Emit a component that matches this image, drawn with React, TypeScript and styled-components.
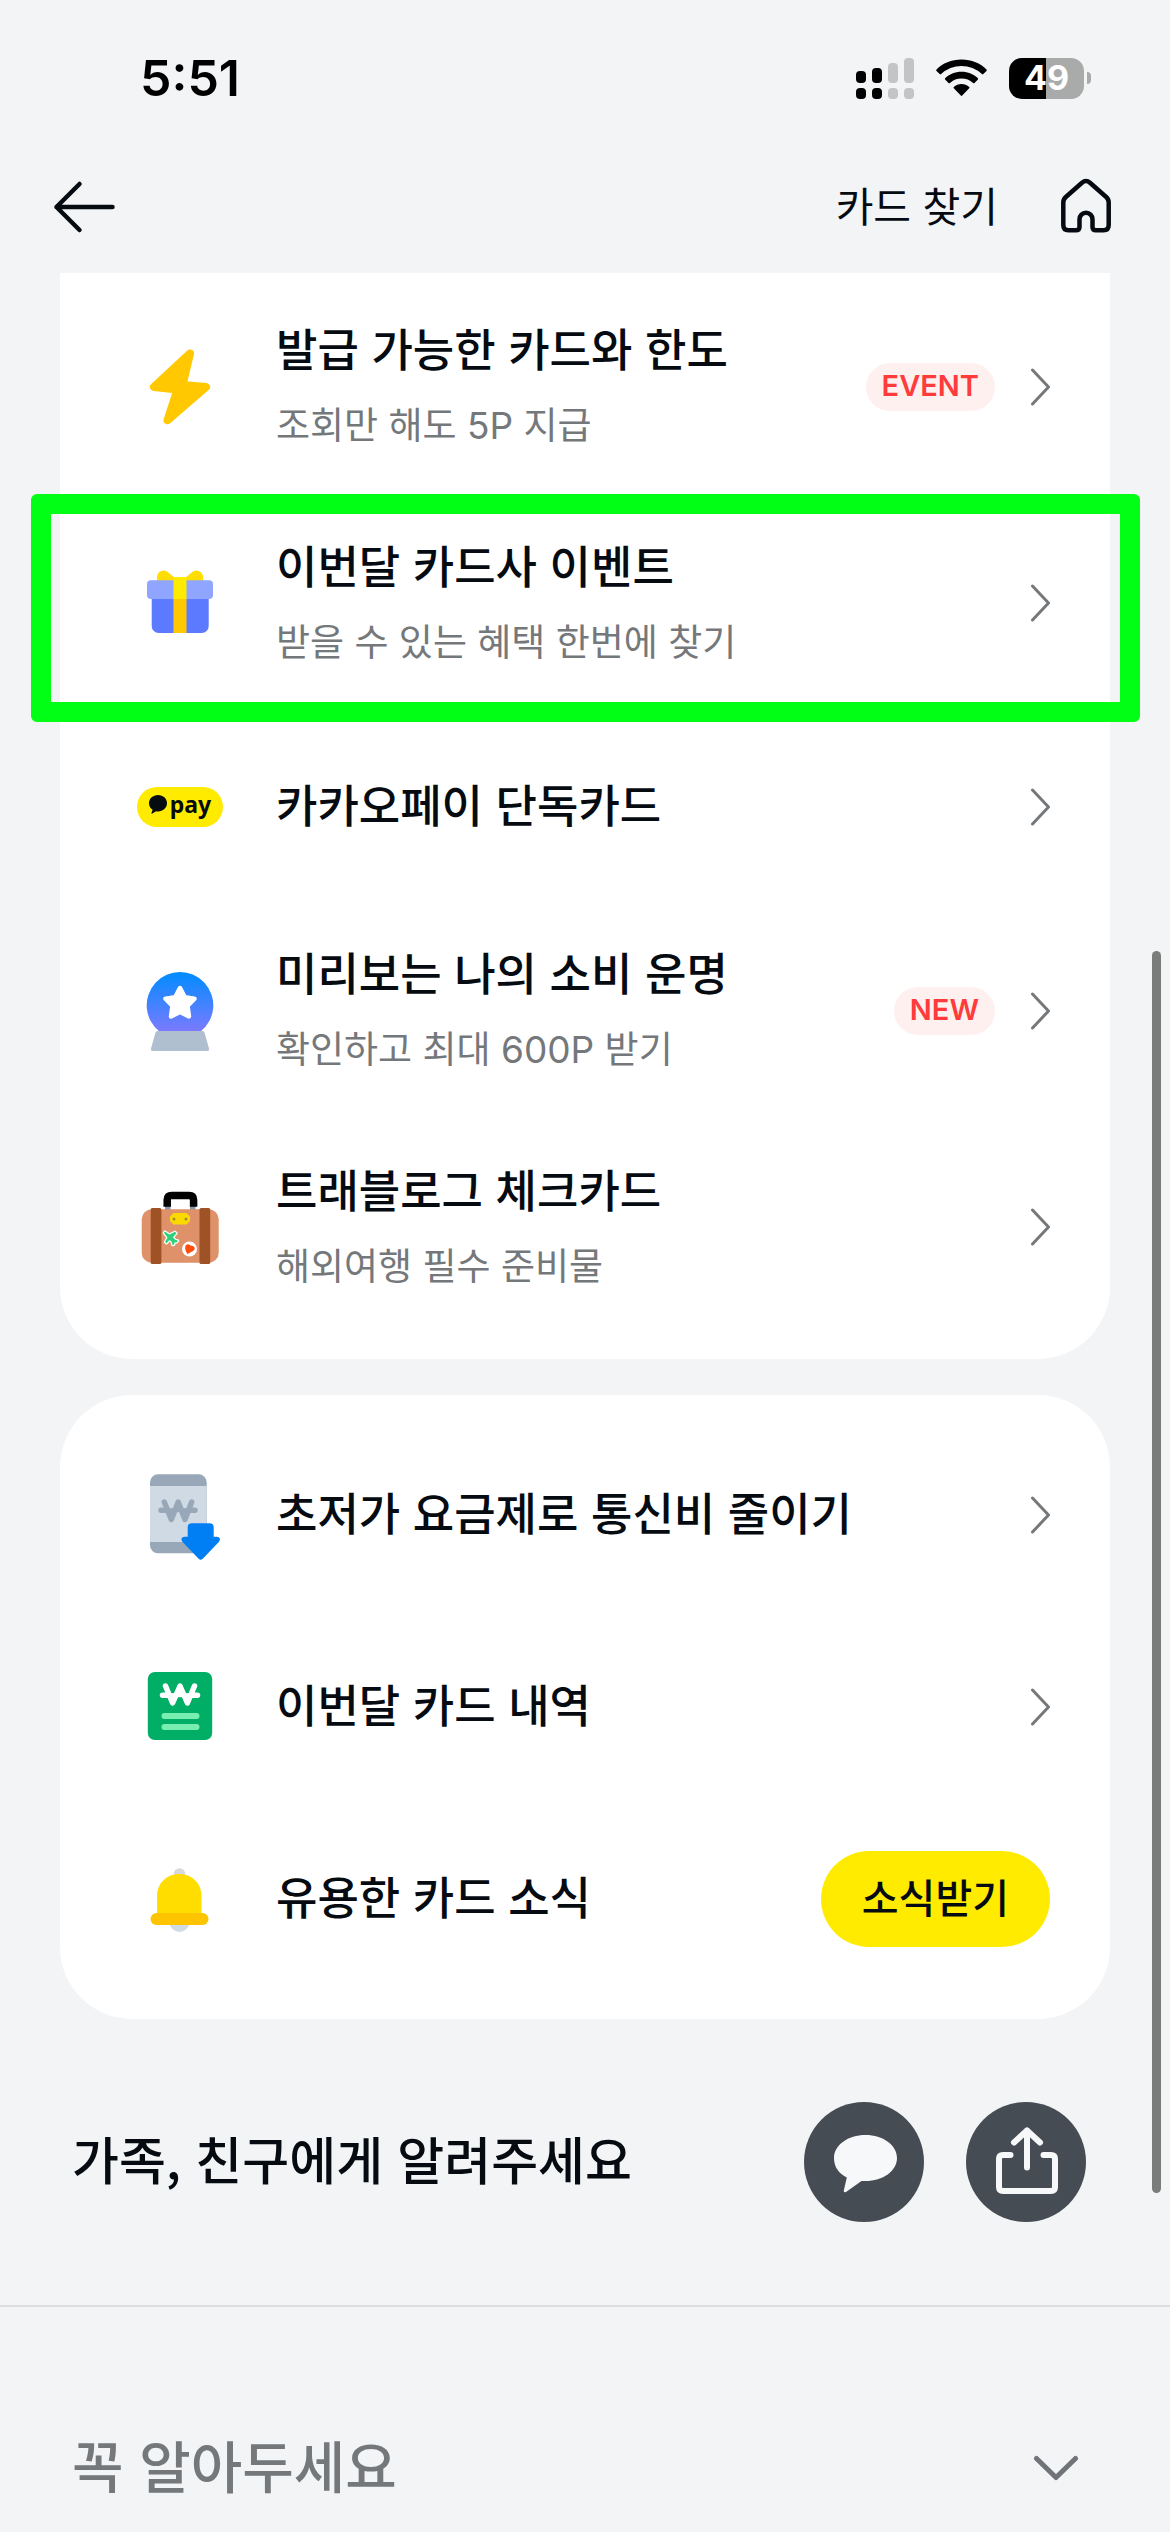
import React from "react";
import styled, { createGlobalStyle, css } from "styled-components";

const color = {
  page: "#f2f4f6",
  card: "#ffffff",
  ink: "#060b11",
  muted: "#75787b",
  line: "#dcdee1",
  yellow: "#ffeb00",
  red: "#ff3b3b",
  redSoft: "#fff0f0",
  slate: "#464c53",
  focus: "#00ff14",
};

const koreanFont = `"Noto Sans CJK KR", "Noto Sans", sans-serif`;
const latinFont = `Inter, Roboto, sans-serif`;

const GlobalStyle = createGlobalStyle`
  *, *::before, *::after { box-sizing: border-box; }
  body {
    margin: 0;
    background: ${color.page};
    color: ${color.ink};
    font-family: ${koreanFont};
    scrollbar-width: none;
  }
  svg { display: block; flex: none; }
`;

const buttonReset = css`
  border: 0;
  padding: 0;
  margin: 0;
  background: none;
  color: inherit;
  font-family: inherit;
  cursor: pointer;
`;

const Page = styled.div`
  display: flex;
  flex-direction: column;
  min-height: 100vh;
`;

const StatusBar = styled.header`
  display: flex;
  align-items: center;
  justify-content: space-between;
  height: 156px;
  padding: 0 79px 0 140px;
  font-family: ${latinFont};
`;

const Clock = styled.time`
  font-size: 50px;
  line-height: 60px;
  font-weight: 600;
  color: #000;
`;

const StatusIcons = styled.div`
  display: flex;
  align-items: center;
  gap: 22px;
`;

const Battery = styled.span`
  display: flex;
  align-items: center;
  gap: 3px;
`;

const BatteryBody = styled.span`
  display: flex;
  align-items: center;
  justify-content: center;
  width: 75px;
  height: 41px;
  border-radius: 13px;
  background: linear-gradient(90deg, #000 50%, #a9abaa 50%);
  color: #fff;
  font-size: 34px;
  line-height: 40px;
  font-weight: 700;
`;

const BatteryTip = styled.span`
  width: 4px;
  height: 12px;
  border-radius: 0 4px 4px 0;
  background: #a9abaa;
`;

const NavBar = styled.nav`
  display: flex;
  align-items: center;
  justify-content: space-between;
  height: 102px;
  margin-bottom: 15px;
  padding: 0 56px 0 52px;
`;

const NavActions = styled.div`
  display: flex;
  align-items: center;
  gap: 60px;
`;

const IconButton = styled.button`
  ${buttonReset}
  display: flex;
`;

const TextLink = styled.a`
  padding-bottom: 6px;
  color: ${color.ink};
  text-decoration: none;
  font-size: 41px;
  line-height: 60px;
`;

const Cards = styled.main`
  display: flex;
  flex-direction: column;
  gap: 36px;
  padding: 0 60px;
`;

const Card = styled.ul<{ $continued?: boolean }>`
  list-style: none;
  margin: 0;
  padding: ${(p) => (p.$continued ? "6px 0 24px" : "24px 0")};
  border-radius: ${(p) => (p.$continued ? "0 0 72px 72px" : "72px")};
  background: ${color.card};
`;

const Item = styled.li`
  position: relative;
`;

const FocusFrame = styled.span`
  position: absolute;
  inset: -1px -30px -11px -29px;
  border: 20px solid ${color.focus};
  border-radius: 6px;
  pointer-events: none;
`;

const rowLayout = css<{ $tall?: boolean }>`
  display: flex;
  align-items: center;
  gap: 36px;
  min-height: ${(p) => (p.$tall ? 216 : 192)}px;
  padding: 0 60px;
  color: inherit;
  text-decoration: none;
`;

const RowLink = styled.a`
  ${rowLayout}
`;

const RowBox = styled.div`
  ${rowLayout}
`;

const IconSlot = styled.span`
  display: flex;
  align-items: center;
  justify-content: center;
  flex: none;
  width: 120px;
  height: 120px;
`;

const Labels = styled.span`
  display: flex;
  flex-direction: column;
  gap: 12px;
  flex: 1;
  padding-bottom: 6px;
`;

const Title = styled.span`
  font-size: 45px;
  line-height: 68px;
  font-weight: 500;
`;

const Caption = styled.span`
  color: ${color.muted};
  font-size: 37px;
  line-height: 58px;
`;

const Latin = styled.span`
  font-family: ${latinFont};
`;

const Badge = styled.span`
  padding: 0 16px 2px;
  border-radius: 24px;
  background: ${color.redSoft};
  color: ${color.red};
  font-family: ${latinFont};
  font-size: 29px;
  line-height: 46px;
  font-weight: 600;
`;

const PillButton = styled.button`
  ${buttonReset}
  height: 96px;
  padding: 0 41px 6px;
  border-radius: 48px;
  background: ${color.yellow};
  font-size: 40px;
  line-height: 60px;
  font-weight: 500;
`;

const PayLogo = styled.span`
  display: flex;
  align-items: center;
  justify-content: center;
  gap: 3px;
  width: 86px;
  height: 40px;
  border-radius: 20px;
  background: ${color.yellow};
  font-family: "Noto Sans", "Open Sans", sans-serif;
  font-size: 23px;
  line-height: 32px;
  font-weight: 700;
  padding-bottom: 6px;
`;

const ShareBar = styled.section`
  display: flex;
  align-items: center;
  justify-content: space-between;
  height: 288px;
  padding: 0 84px 0 72px;
  border-bottom: 2px solid ${color.line};
`;

const ShareTitle = styled.h2`
  margin: 0;
  padding-bottom: 8px;
  font-size: 51px;
  line-height: 76px;
  font-weight: 500;
`;

const ShareButtons = styled.div`
  display: flex;
  gap: 42px;
`;

const RoundButton = styled.button`
  ${buttonReset}
  width: 120px;
  height: 120px;
  border-radius: 50%;
  background: ${color.slate};
`;

const NoticeToggle = styled.button`
  ${buttonReset}
  display: flex;
  align-items: center;
  justify-content: space-between;
  width: 100%;
  padding: 115px 91px 18px 72px;
  color: ${color.muted};
`;

const NoticeLabel = styled.span`
  padding-bottom: 8px;
  font-size: 56px;
  line-height: 84px;
  font-weight: 500;
`;

const ScrollThumb = styled.div`
  position: fixed;
  top: 951px;
  right: 9px;
  width: 9px;
  height: 1242px;
  border-radius: 5px;
  background: #7a7c7b;
`;

/* ---------- status and navigation icons ---------- */

const SignalIcon = () => (
  <svg width="58" height="41" viewBox="0 0 58 41" aria-hidden="true">
    <g fill="#000">
      <rect x="0" y="13" width="10" height="12" rx="4" />
      <rect x="16" y="10" width="10" height="15" rx="4" />
      <rect x="0" y="30" width="10" height="11" rx="4" />
      <rect x="16" y="30" width="10" height="11" rx="4" />
    </g>
    <g fill="#c3c4c6">
      <rect x="32" y="5" width="10" height="20" rx="4" />
      <rect x="48" y="0" width="10" height="25" rx="4" />
      <rect x="32" y="30" width="10" height="11" rx="4" />
      <rect x="48" y="30" width="10" height="11" rx="4" />
    </g>
  </svg>
);

const WifiIcon = () => (
  <svg width="51" height="38" viewBox="0.5 0 51 38" aria-hidden="true">
    <path d="M26 0.5C36 0.5 45 4.3 51 10.5Q51.6 11.2 51 11.9L47.8 15.1Q47.1 15.700 46.400 15.100A29.500 29.500 0 0 0 5.600 15.100Q4.900 15.700 4.200 15.100L1 11.900Q0.400 11.200 1 10.500C7 4.300 16 0.500 26 0.500Z" />
    <path d="M26 12.800C32.600 12.800 38.200 15.300 42.400 19.200Q43 19.900 42.400 20.600L39 23.900Q38.300 24.500 37.600 23.900A17.500 17.500 0 0 0 14.400 23.900Q13.700 24.500 13 23.900L9.600 20.600Q9 19.900 9.600 19.200C13.800 15.300 19.400 12.800 26 12.800Z" />
    <path d="M26 25C29 25 31.700 26.100 33.700 27.900Q34.400 28.600 33.700 29.300L26.700 36.600Q26 37.300 25.300 36.600L18.300 29.300Q17.600 28.600 18.300 27.900C20.300 26.100 23 25 26 25Z" />
  </svg>
);

const BackIcon = () => (
  <svg width="66" height="56" viewBox="0 0 66 56" fill="none" stroke={color.ink} strokeWidth="4.5" strokeLinecap="round" strokeLinejoin="round" aria-hidden="true">
    <path d="M27.500 5L4.500 28L27.500 51M4.500 28H60.500" />
  </svg>
);

const HomeIcon = () => (
  <svg width="56" height="60" viewBox="0 0 56 60" fill="none" stroke={color.ink} strokeWidth="4.5" strokeLinejoin="round" aria-hidden="true">
    <path d="M7.800 20Q5.300 22.200 5.300 25.500V48Q5.300 53.300 10.500 53.300H18Q21.500 53.300 21.500 50V42.200A6.500 6.500 0 0 1 34.500 42.200V50Q34.500 53.300 38 53.300H45.500Q50.700 53.300 50.700 48V25.500Q50.700 22.200 48.200 20L32 5.700Q28 2.300 24 5.700Z" />
  </svg>
);

const ChevronRight = () => (
  <svg width="19" height="38" viewBox="0 0 19 38" fill="none" stroke={color.muted} strokeWidth="3" strokeLinecap="round" strokeLinejoin="round" aria-hidden="true">
    <path d="M1.500 2L17.500 19L1.500 36" />
  </svg>
);

const ChevronDown = () => (
  <svg width="46" height="28" viewBox="0 0 46 28" fill="none" stroke="#707378" strokeWidth="5" strokeLinecap="round" strokeLinejoin="round" aria-hidden="true">
    <path d="M3.500 4.500L23 23.500L42.500 4.500" />
  </svg>
);

/* ---------- menu icons ---------- */

const Art = ({ children }: { children: React.ReactNode }) => (
  <svg width="120" height="120" viewBox="0 0 120 120" aria-hidden="true">
    {children}
  </svg>
);

const BoltIcon = () => (
  <Art>
    <path d="M70 26.500L34 60L57.500 62.500L47.500 93.300L86 60L62.500 58Z" fill="#ffc800" stroke="#ffc800" strokeWidth="8" strokeLinejoin="round" />
  </Art>
);

const GiftIcon = () => (
  <Art>
    <path d="M37 38V34.500A6.700 6.700 0 0 1 48 29.200L54 34.300H66L72 29.200A6.700 6.700 0 0 1 83 34.500V38Z" fill="#ffdd00" />
    <path d="M31.700 54H88.700V83A7 7 0 0 1 81.700 90H38.700A7 7 0 0 1 31.700 83Z" fill="#5c7aff" />
    <rect x="27" y="37.300" width="66" height="18.700" rx="4" fill="#8fa5ff" />
    <rect x="53.500" y="34.200" width="13" height="22" fill="#ffeb00" />
    <rect x="53.500" y="56" width="13" height="34" fill="#ffc800" />
  </Art>
);

const PayIcon = () => (
  <PayLogo>
    <svg width="18" height="20" viewBox="0 0 18 20" fill={color.ink} aria-hidden="true">
      <path d="M9 1C14 1 18 4.600 18 9.200S14 17.400 9 17.400Q8 17.400 7 17.200L3 19.700Q2.200 20 2.500 19L3.600 15.700Q0 13.500 0 9.200C0 4.600 4 1 9 1Z" />
    </svg>
    pay
  </PayLogo>
);

const CrystalIcon = () => (
  <Art>
    <defs>
      <linearGradient id="orb" x1="0" y1="21" x2="0" y2="81" gradientUnits="userSpaceOnUse">
        <stop offset="0" stopColor="#008cff" />
        <stop offset="1" stopColor="#7c7aff" />
      </linearGradient>
    </defs>
    <path d="M39.400 80.500A33.300 33.300 0 1 1 80.600 80.500Z" fill="url(#orb)" />
    <path d="M60 37L64.700 46.100L74.500 47.700L67.500 55L69 65.400L60 60.900L51 65.400L52.500 55L45.500 47.700L55.300 46.100Z" fill="#fff" stroke="#fff" strokeWidth="4.500" strokeLinejoin="round" />
    <path d="M37.500 80H82.500Q84 80 84.500 81.500L89 97.500Q89.500 100 87 100H33Q30.500 100 31 97.500L35.500 81.500Q36 80 37.500 80Z" fill="#b0bfd0" />
  </Art>
);

const SuitcaseIcon = () => (
  <Art>
    <path d="M45 38h5.500v6H45zM70 38h5.500v6H70z" fill="#8496a8" />
    <path d="M47.200 36V33Q47.200 28.500 52 28.500H69Q73.600 28.500 73.600 33V36" fill="none" stroke="#000" strokeWidth="7.500" strokeLinecap="square" strokeLinejoin="round" />
    <rect x="21.700" y="42.300" width="77" height="53.400" rx="10" fill="#df916a" />
    <rect x="30.700" y="41" width="10.700" height="56" rx="1.500" fill="#9e5226" />
    <rect x="79.500" y="41" width="10.700" height="56" rx="1.500" fill="#9e5226" />
    <path d="M53.500 46H66.500L70 49.500V54L66.500 57.500H53.500L50 54V49.500Z" fill="#fbd900" />
    <circle cx="54" cy="52" r="1.500" fill="#9a8f33" />
    <circle cx="66" cy="52" r="1.500" fill="#9a8f33" />
    <path
      d="M44.800 64.500L49.500 67.500L55 64.800L56.500 66.300L53 70.300L55.500 73L58 73.500L57 75.200L54.500 75.500L54 77.800L52.500 78L51.500 74.500L49.500 73L46.500 76.300L45 75L47.500 70.500L44 66Z"
      fill="#2fd07c"
      stroke="#fff"
      strokeWidth="2.500"
      strokeLinejoin="round"
      paintOrder="stroke"
    />
    <circle cx="69.500" cy="82" r="7.500" fill="#fff" />
    <path d="M65.500 78.800Q68 76 70.300 78.500Q74 78.300 74.700 81.200Q75 83 73 84L67.500 87Q64.300 82.500 65.500 78.800Z" fill="#ff4d0a" />
  </Art>
);

const PhonePlanIcon = () => (
  <Art>
    <rect x="30" y="19.300" width="56.700" height="79" rx="8" fill="#98a8b9" />
    <rect x="30" y="31" width="56.700" height="56" fill="#d0dae5" />
    <path d="M44.300 47L51.300 64.500L58.200 47L65 64.500L71.700 47M41 55.200H47.500M69 55.200H75" fill="none" stroke="#98a8b9" strokeWidth="5.500" strokeLinecap="round" strokeLinejoin="round" />
    <path d="M48 55.200H68" stroke="#98a8b9" strokeWidth="4" />
    <path d="M71.700 68.300H89.700Q93.700 68.300 93.700 72.300V81.700H96.500Q102 82.500 98.800 87L82.800 103.800Q80.700 105.600 78.600 103.800L62.600 87Q59.400 82.500 64.900 81.700H67.700V72.300Q67.700 68.300 71.700 68.300Z" fill="#007ff5" />
  </Art>
);

const StatementIcon = () => (
  <Art>
    <rect x="27.800" y="25" width="64.400" height="68" rx="7" fill="#00ae66" />
    <path d="M45.500 39L52.600 56L60 39L67.400 56L74.500 39M42.500 48.200H49M71 48.200H77.500" fill="none" stroke="#fff" strokeWidth="5.500" strokeLinecap="round" strokeLinejoin="round" />
    <path d="M49 48.200H71" stroke="#fff" strokeWidth="4" />
    <path d="M44.500 69H76.500M44.500 80H76.500" stroke="#78efb0" strokeWidth="6" strokeLinecap="round" />
  </Art>
);

const BellIcon = () => (
  <Art>
    <circle cx="59.500" cy="35" r="5.800" fill="#d8d9dc" />
    <circle cx="59.500" cy="83" r="10" fill="#d0dbe6" />
    <path d="M37 76V57C37 44 47 35 59.300 35S81.500 44 81.500 57V76Z" fill="#ffdd00" />
    <rect x="30.500" y="74" width="58" height="12" rx="6" fill="#ffc400" />
  </Art>
);

/* ---------- share icons ---------- */

const TalkIcon = () => (
  <Art>
    <path d="M61.500 33C79 33 93 43 93 56S79 79 61.500 79H57.500L42 90Q39.500 91 39.800 88.500L42.800 75.500Q30 69 30 56C30 43 44 33 61.500 33Z" fill="#f7f8fa" />
  </Art>
);

const ShareIcon = () => (
  <Art>
    <path d="M44.500 53H37Q33 53 33 57V85Q33 89 37 89H85Q89 89 89 85V57Q89 53 85 53H77.500M61 65.500V28.500M48 40.500L61 28.500L74 40.500" fill="none" stroke="#f7f8fa" strokeWidth="6" strokeLinecap="round" strokeLinejoin="round" />
  </Art>
);

/* ---------- data ---------- */

type MenuItem = {
  icon: React.ReactNode;
  title: string;
  caption?: React.ReactNode;
  badge?: string;
  focused?: boolean;
  action?: string;
};

const cardMenu: MenuItem[] = [
  {
    icon: <BoltIcon />,
    title: "발급 가능한 카드와 한도",
    caption: (
      <>
        조회만 해도 <Latin>5P</Latin> 지급
      </>
    ),
    badge: "EVENT",
  },
  { icon: <GiftIcon />, title: "이번달 카드사 이벤트", caption: "받을 수 있는 혜택 한번에 찾기", focused: true },
  { icon: <PayIcon />, title: "카카오페이 단독카드" },
  {
    icon: <CrystalIcon />,
    title: "미리보는 나의 소비 운명",
    caption: (
      <>
        확인하고 최대 <Latin>600P</Latin> 받기
      </>
    ),
    badge: "NEW",
  },
  { icon: <SuitcaseIcon />, title: "트래블로그 체크카드", caption: "해외여행 필수 준비물" },
];

const serviceMenu: MenuItem[] = [
  { icon: <PhonePlanIcon />, title: "초저가 요금제로 통신비 줄이기" },
  { icon: <StatementIcon />, title: "이번달 카드 내역" },
  { icon: <BellIcon />, title: "유용한 카드 소식", action: "소식받기" },
];

const MenuRow = ({ item }: { item: MenuItem }) => {
  const content = (
    <>
      <IconSlot>{item.icon}</IconSlot>
      <Labels>
        <Title>{item.title}</Title>
        {item.caption && <Caption>{item.caption}</Caption>}
      </Labels>
      {item.badge && <Badge>{item.badge}</Badge>}
    </>
  );

  return (
    <Item>
      {item.action ? (
        <RowBox>
          {content}
          <PillButton type="button">{item.action}</PillButton>
        </RowBox>
      ) : (
        <RowLink href="#" $tall={Boolean(item.caption)}>
          {content}
          <ChevronRight />
        </RowLink>
      )}
      {item.focused && <FocusFrame />}
    </Item>
  );
};

export default function App() {
  return (
    <Page lang="ko">
      <GlobalStyle />
      <StatusBar>
        <Clock>5:51</Clock>
        <StatusIcons>
          <SignalIcon />
          <WifiIcon />
          <Battery>
            <BatteryBody>49</BatteryBody>
            <BatteryTip />
          </Battery>
        </StatusIcons>
      </StatusBar>

      <NavBar>
        <IconButton type="button" aria-label="뒤로">
          <BackIcon />
        </IconButton>
        <NavActions>
          <TextLink href="#">카드 찾기</TextLink>
          <IconButton type="button" aria-label="홈">
            <HomeIcon />
          </IconButton>
        </NavActions>
      </NavBar>

      <Cards>
        <Card $continued>
          {cardMenu.map((item) => (
            <MenuRow key={item.title} item={item} />
          ))}
        </Card>
        <Card>
          {serviceMenu.map((item) => (
            <MenuRow key={item.title} item={item} />
          ))}
        </Card>
      </Cards>

      <ShareBar>
        <ShareTitle>가족, 친구에게 알려주세요</ShareTitle>
        <ShareButtons>
          <RoundButton type="button" aria-label="카카오톡으로 공유">
            <TalkIcon />
          </RoundButton>
          <RoundButton type="button" aria-label="공유">
            <ShareIcon />
          </RoundButton>
        </ShareButtons>
      </ShareBar>

      <NoticeToggle type="button" aria-expanded={false}>
        <NoticeLabel>꼭 알아두세요</NoticeLabel>
        <ChevronDown />
      </NoticeToggle>
      <ScrollThumb />
    </Page>
  );
}
